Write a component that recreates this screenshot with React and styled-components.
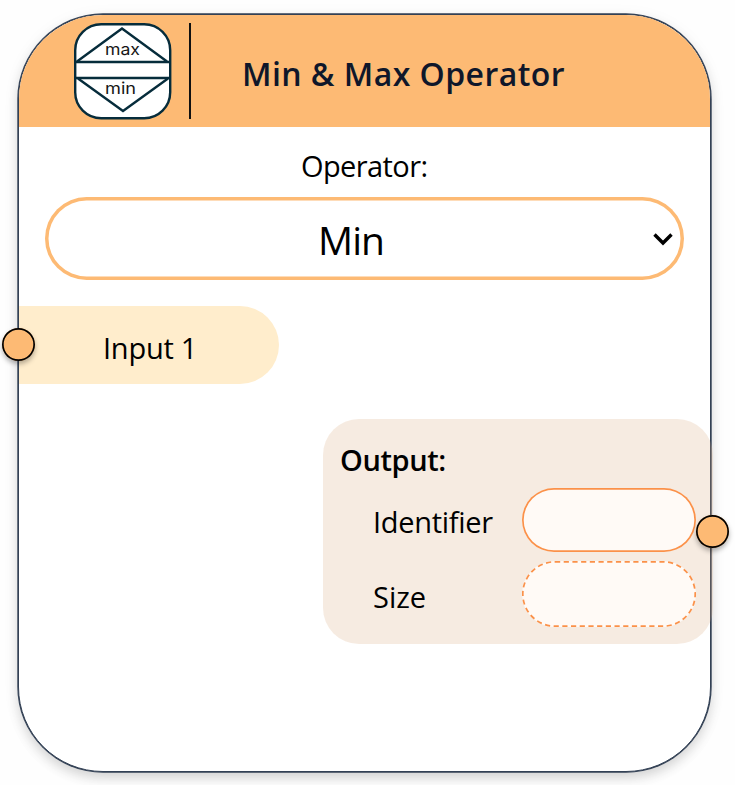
import React from "react";
import styled, { createGlobalStyle } from "styled-components";

const GlobalStyle = createGlobalStyle`
  *, *::before, *::after { box-sizing: border-box; }
  body {
    margin: 0;
    background: #fefefe;
    font-family: "Open Sans", "Noto Sans", sans-serif;
    color: #000;
  }
`;

const Canvas = styled.main`
  width: 735px;
  height: 785px;
  padding: 14px 0 0 18px;
  overflow: hidden;
`;

const Card = styled.section`
  position: relative;
  width: 693px;
  height: 758px;
  border-radius: 85px;
  background: #fff;
  border: 1px solid #334155;
  box-shadow: 0 0 0 0.7px #334155, 0 6px 12px rgba(0, 0, 0, 0.14), 0 3px 18px rgba(0, 0, 0, 0.05);
`;

const Header = styled.header`
  display: flex;
  align-items: flex-start;
  height: 112px;
  padding: 8px 0 0 55px;
  border-radius: 84px 84px 0 0;
  background: #fdba74;
`;

const Divider = styled.span`
  width: 2px;
  height: 96px;
  margin-left: 17px;
  background: #111;
`;

const Title = styled.h1`
  margin: 31px 0 0 51px;
  font-size: 32px;
  line-height: 40px;
  font-weight: 600;
  letter-spacing: 0.45px;
  white-space: nowrap;
  color: #0f172a;
`;

const Text = styled.span`
  display: block;
  font-size: ${(p) => p.$size || 29}px;
  line-height: 40px;
  font-weight: ${(p) => p.$weight || 400};
  letter-spacing: ${(p) => p.$tracking || 0}px;
  white-space: nowrap;
`;

const OperatorField = styled.div`
  display: flex;
  flex-direction: column;
  padding: 19px 26px 0;
`;

const OperatorLabel = styled.div`
  padding-left: 256px;
  height: 51px;
`;

const Select = styled.div`
  display: flex;
  align-items: center;
  justify-content: space-between;
  height: 83px;
  padding: 2px 11px 0 273px;
  border-radius: 42px;
  background: #fff;
  box-shadow: inset 0 0 0 3.5px #fdba74;
`;

const InputPort = styled.div`
  display: flex;
  align-items: center;
  width: 260px;
  height: 78px;
  margin-top: 26px;
  padding: 5px 0 0 84px;
  border-radius: 0 39px 39px 0;
  background: #ffedcc;
`;

const OutputPanel = styled.div`
  display: flex;
  flex-direction: column;
  width: 390px;
  height: 225px;
  margin: 35px 0 0 304px;
  padding: 21px 17px 0 17px;
  border-radius: 36px;
  background: rgba(214, 166, 118, 0.22);
`;

const OutputRow = styled.div`
  display: flex;
  align-items: flex-start;
  justify-content: space-between;
  height: 64px;
  margin-top: ${(p) => p.$gap}px;
  padding-left: 33px;

  ${Text} {
    margin-top: ${(p) => p.$labelTop}px;
  }
`;

const Field = styled.div`
  width: 174px;
  height: 64px;
  border-radius: 33px;
  background: #fffaf6;
  box-shadow: inset 0 0 0 1.7px #fb9149;
`;

const DashedField = styled(Field)`
  height: 66px;
  box-shadow: none;
`;

const Handle = styled.span`
  position: absolute;
  left: ${(p) => p.$x}px;
  top: ${(p) => p.$y}px;
  width: 33px;
  height: 33px;
  border-radius: 50%;
  background: #fdba74;
  box-shadow: inset 0 0 0 1.7px #000, 0 3px 5px rgba(0, 0, 0, 0.3);
`;

function MinMaxIcon() {
  return (
    <svg width="98" height="97" viewBox="0 0 98 97" fontFamily="Inter, sans-serif" fontSize="16.500" fill="#161616">
      <rect x="1.2" y="1.2" width="95" height="94" rx="26" fill="#fff" stroke="#062c3b" strokeWidth="2.4" />
      <g fill="none" stroke="#062c3b" strokeWidth="2.4">
        <path d="M1 39H96M1 55H96" />
        <path d="M3 38.500L48 5.500L93 38.500" />
        <path d="M4 55.500L49 88L94 55.500" />
      </g>
      <text x="31" y="32" textLength="35" lengthAdjust="spacingAndGlyphs">max</text>
      <text x="31" y="71" textLength="31" lengthAdjust="spacingAndGlyphs">min</text>
    </svg>
  );
}

function Chevron() {
  return (
    <svg width="20" height="13" viewBox="0 0 20 13">
      <path d="M1.500 1.500L10 10L18.500 1.500" fill="none" stroke="#000" strokeWidth="3.400" />
    </svg>
  );
}

function DashedOutline() {
  return (
    <svg width="174" height="66" viewBox="0 0 174 66" display="block">
      <rect x="0.8" y="0.8" width="172.4" height="64.4" rx="32.2" fill="none" stroke="#fb9149" strokeWidth="1.700" strokeDasharray="5.200 3.500" />
    </svg>
  );
}

export default function App() {
  return (
    <Canvas>
      <GlobalStyle />
      <Card>
        <Header>
          <MinMaxIcon />
          <Divider />
          <Title>Min &amp; Max Operator</Title>
        </Header>
        <OperatorField>
          <OperatorLabel>
            <Text $tracking={-0.6}>Operator:</Text>
          </OperatorLabel>
          <Select>
            <Text $size={39} $tracking={-0.9}>Min</Text>
            <Chevron />
          </Select>
        </OperatorField>
        <InputPort>
          <Text $tracking={-0.25}>Input 1</Text>
        </InputPort>
        <OutputPanel>
          <Text $weight={600} $tracking={-0.4}>Output:</Text>
          <OutputRow $gap={8} $labelTop={14}>
            <Text $tracking={-0.3}>Identifier</Text>
            <Field />
          </OutputRow>
          <OutputRow $gap={9} $labelTop={16}>
            <Text>Size</Text>
            <DashedField>
              <DashedOutline />
            </DashedField>
          </OutputRow>
        </OutputPanel>
        <Handle $x={-17} $y={313} />
        <Handle $x={677} $y={500} />
      </Card>
    </Canvas>
  );
}
